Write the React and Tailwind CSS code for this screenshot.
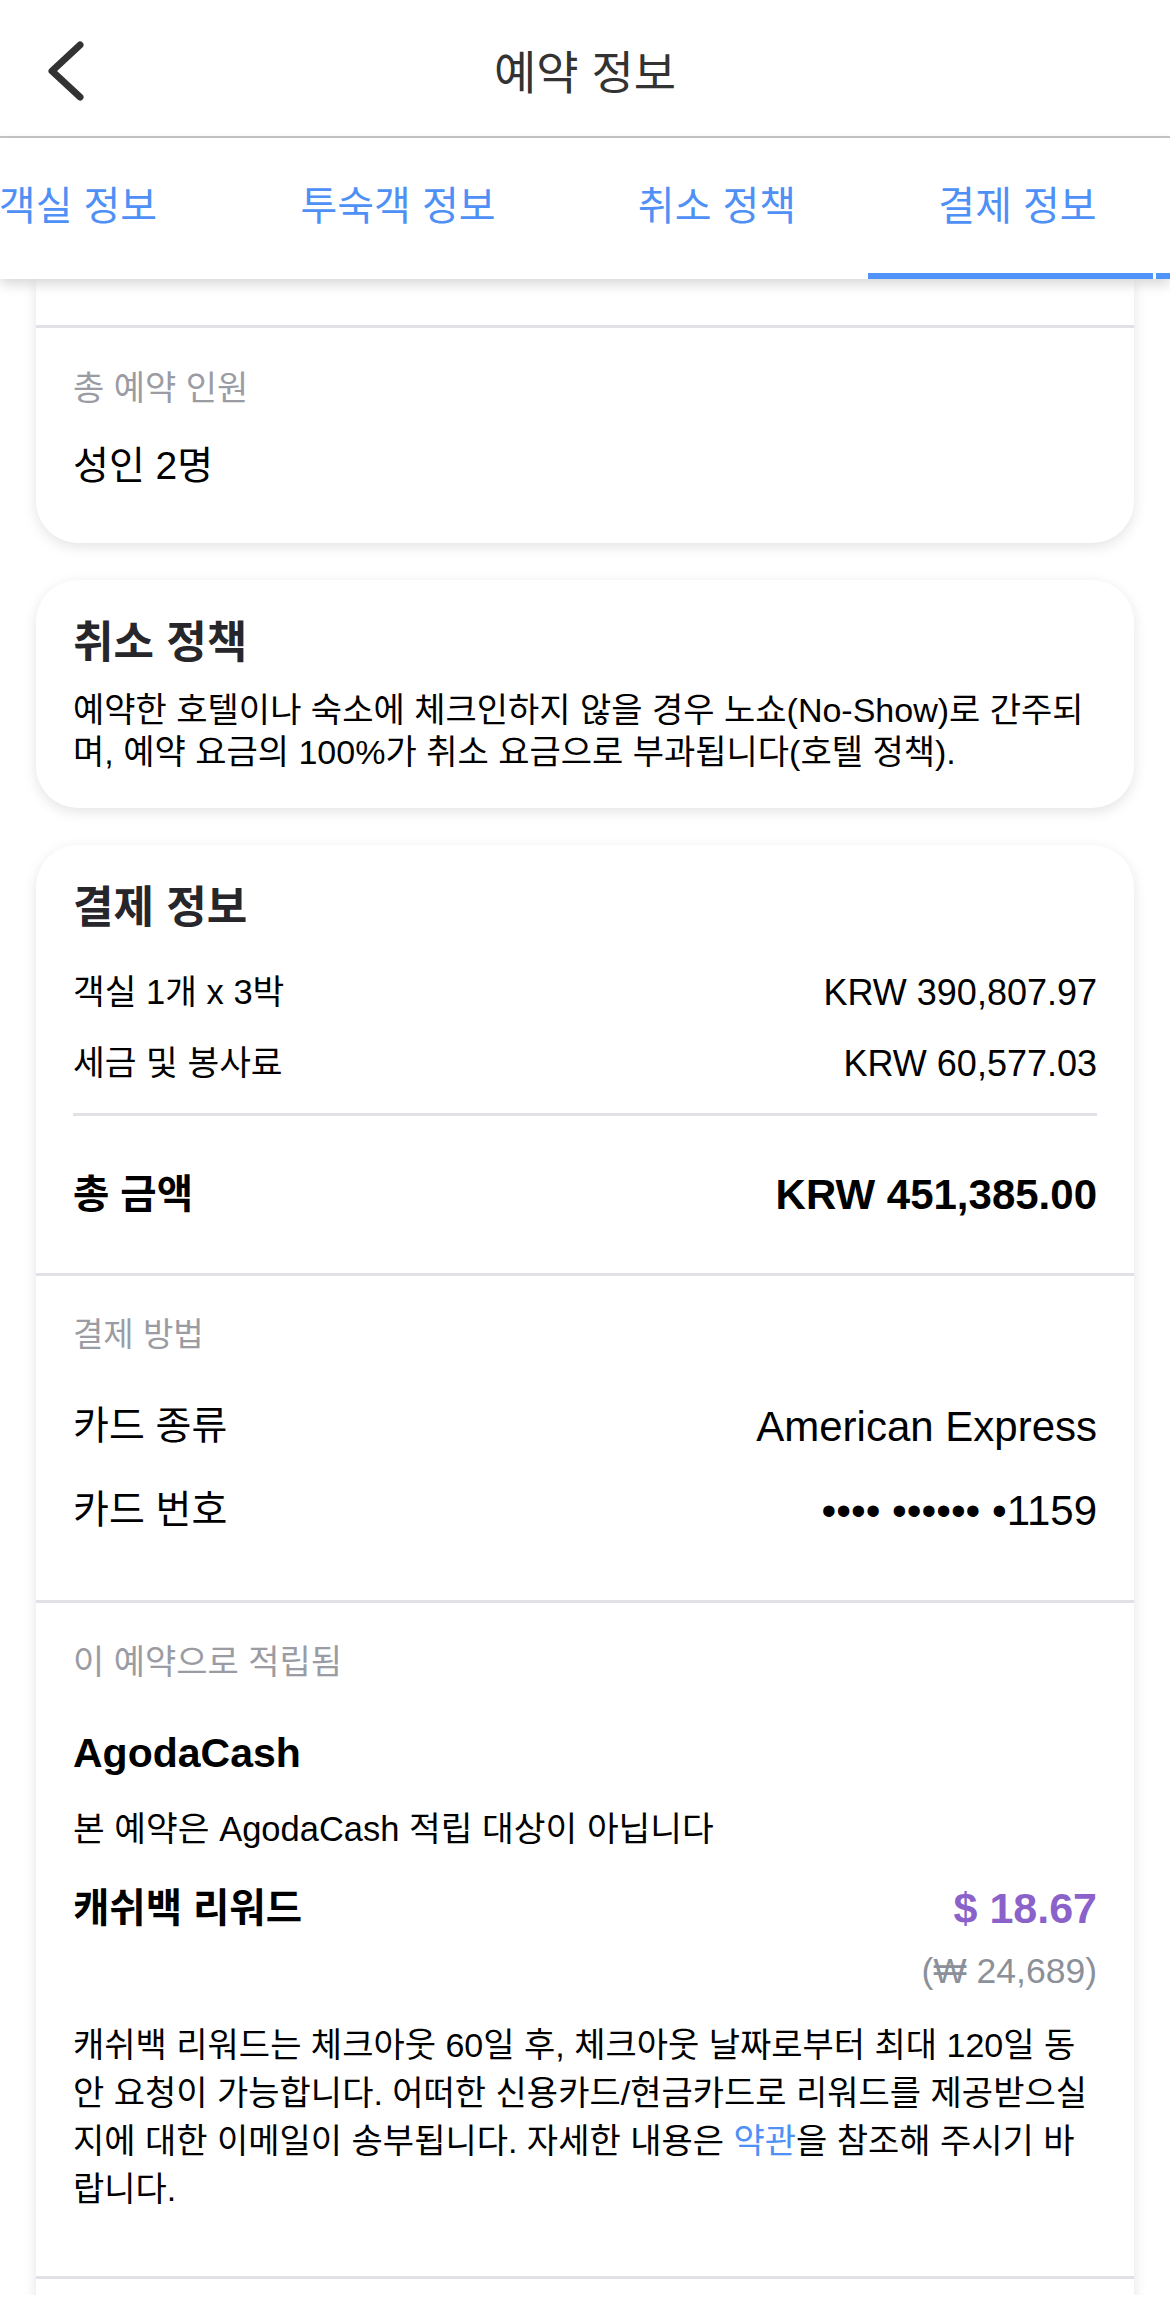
import React from "react";

function Tab({ label, width, active, extraPad = "" }) {
  return (
    <div className="flex h-full shrink-0 flex-col" style={{ width }}>
      <div className={`flex flex-1 items-center justify-center ${extraPad}`}>
        <span className="whitespace-nowrap text-[40px] leading-[50px] text-[#4e90f5]">{label}</span>
      </div>
      <div className={`h-[6px] ${active ? "bg-[#5094fa]" : "bg-transparent"}`} />
    </div>
  );
}

export default function App() {
  return (
    <div className="relative flex h-[2315px] w-[1170px] flex-col overflow-hidden bg-white font-['Liberation_Sans','Noto_Sans_CJK_KR',sans-serif] text-black">
      {/* Header */}
      <div className="relative flex h-[138px] shrink-0 items-start justify-center border-b-2 border-[#c6c6c6] bg-white">
        <svg
          className="absolute left-[44px] top-[39px]"
          width="48"
          height="64"
          viewBox="0 0 48 64"
          fill="none"
        >
          <polyline
            points="36,6 8,32 36,58"
            stroke="#333333"
            strokeWidth="7"
            strokeLinecap="round"
            strokeLinejoin="round"
          />
        </svg>
        <div className="mt-[46px] text-[46px] leading-[54px] text-[#333333]">예약 정보</div>
      </div>

      {/* Tabs */}
      <div className="relative z-10 h-[141px] shrink-0 bg-white shadow-[0_5px_12px_rgba(0,0,0,0.16)]">
        <div className="ml-[-93px] flex h-full gap-[3px]">
          <Tab label="객실 정보" width={320} extraPad="pl-[22px]" />
          <Tab label="투숙객 정보" width={336} />
          <Tab label="취소 정책" width={296} />
          <Tab label="결제 정보" width={285} active extraPad="pl-[14px]" />
          <Tab label="" width={100} active />
        </div>
      </div>

      {/* Scroll content */}
      <div className="flex flex-1 flex-col overflow-hidden px-[36px]">
        {/* Card 1 (partially scrolled) */}
        <div className="shrink-0 rounded-b-[42px] bg-white shadow-[0_4px_14px_rgba(0,0,0,0.11)]">
          <div className="h-[46px]" />
          <div className="h-[3px] bg-[#e1e1e7]" />
          <div className="px-[37px] pb-[55px] pt-[40px]">
            <div className="text-[34px] leading-[40px] text-[#9b9ca3]">총 예약 인원</div>
            <div className="mt-[36px] text-[39px] leading-[44px] text-black">성인 2명</div>
          </div>
        </div>

        {/* Card 2 */}
        <div className="mt-[37px] shrink-0 rounded-[42px] bg-white px-[37px] pb-[35px] pt-[38px] shadow-[0_4px_14px_rgba(0,0,0,0.11)]">
          <div className="text-[44px] font-bold leading-[50px] text-[#26262b]">취소 정책</div>
          <div className="mt-[22px] text-[34px] leading-[41.5px] text-black">
            <div className="whitespace-nowrap">예약한 호텔이나 숙소에 체크인하지 않을 경우 노쇼(No-Show)로 간주되</div>
            <div className="whitespace-nowrap">며, 예약 요금의 100%가 취소 요금으로 부과됩니다(호텔 정책).</div>
          </div>
        </div>

        {/* Card 3 */}
        <div className="mt-[37px] shrink-0 rounded-t-[42px] bg-white shadow-[0_4px_14px_rgba(0,0,0,0.11)]">
          <div className="px-[37px] pb-[53.5px] pt-[37.5px]">
            <div className="text-[44px] font-bold leading-[50px] text-[#26262b]">결제 정보</div>
            <div className="mt-[38px] flex h-[44px] items-center justify-between">
              <span className="text-[34.5px]">객실 1개 x 3박</span>
              <span className="text-[36px]">KRW 390,807.97</span>
            </div>
            <div className="mt-[27.5px] flex h-[44px] items-center justify-between">
              <span className="text-[34.5px]">세금 및 봉사료</span>
              <span className="text-[36px]">KRW 60,577.03</span>
            </div>
            <div className="mt-[27px] h-[3px] bg-[#e1e1e7]" />
            <div className="mt-[53.5px] flex h-[50px] items-center justify-between">
              <span className="text-[39.5px] font-bold">총 금액</span>
              <span className="text-[42px] font-bold">KRW 451,385.00</span>
            </div>
          </div>
          <div className="h-[3px] bg-[#e1e1e7]" />
          <div className="px-[37px] pb-[66.5px] pt-[39px]">
            <div className="text-[33px] leading-[40px] text-[#9b9ca3]">결제 방법</div>
            <div className="mt-[48.5px] flex h-[46px] items-center justify-between">
              <span className="text-[39px]">카드 종류</span>
              <span className="text-[42px]">American Express</span>
            </div>
            <div className="mt-[37.5px] flex h-[46px] items-center justify-between">
              <span className="text-[39px]">카드 번호</span>
              <span className="text-[42px]">•••• •••••• •1159</span>
            </div>
          </div>
          <div className="h-[3px] bg-[#e1e1e7]" />
          <div className="px-[37px] pb-[63px] pt-[39.5px]">
            <div className="text-[34px] leading-[40px] text-[#9b9ca3]">이 예약으로 적립됨</div>
            <div className="mt-[46px] text-[41px] font-bold leading-[50px]">AgodaCash</div>
            <div className="mt-[28.5px] text-[34.5px] leading-[44px]">본 예약은 AgodaCash 적립 대상이 아닙니다</div>
            <div className="mt-[33px] flex h-[50px] items-center justify-between">
              <span className="text-[39.5px] font-bold">캐쉬백 리워드</span>
              <span className="text-[43px] font-bold text-[#8a62c9]">$ 18.67</span>
            </div>
            <div className="mt-[16px] text-right text-[35.5px] leading-[42px] text-[#8b9099]">(₩ 24,689)</div>
            <div className="mt-[29.5px] text-[34px] leading-[48px]">
              <div className="whitespace-nowrap">캐쉬백 리워드는 체크아웃 60일 후, 체크아웃 날짜로부터 최대 120일 동</div>
              <div className="whitespace-nowrap">안 요청이 가능합니다. 어떠한 신용카드/현금카드로 리워드를 제공받으실</div>
              <div className="whitespace-nowrap">
                지에 대한 이메일이 송부됩니다. 자세한 내용은 <span className="text-[#4e90f5]">약관</span>을 참조해 주시기 바
              </div>
              <div className="whitespace-nowrap">랍니다.</div>
            </div>
          </div>
          <div className="h-[3px] bg-[#e1e1e7]" />
          <div className="h-[80px]" />
        </div>
      </div>

      {/* Bottom strip */}
      <div className="h-[20px] shrink-0 bg-white" />
    </div>
  );
}
